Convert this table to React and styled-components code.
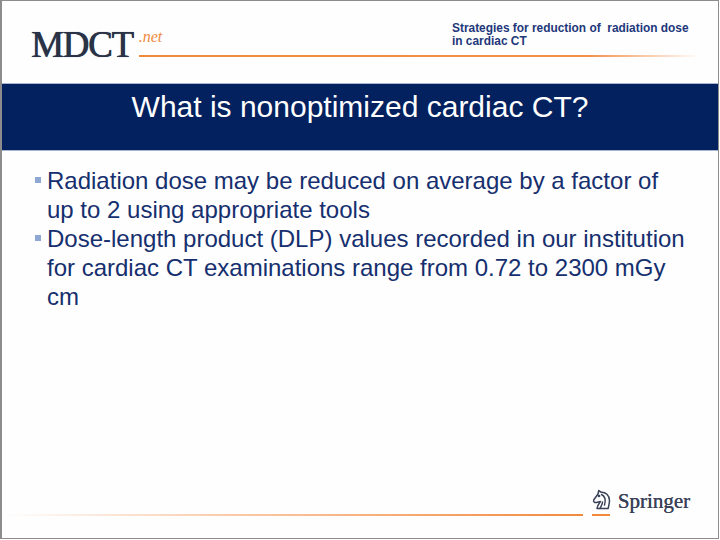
import React from "react";
import styled, { createGlobalStyle } from "styled-components";

const Global = createGlobalStyle`
  html, body { margin: 0; padding: 0; background: #ffffff; }
  * { box-sizing: border-box; }
`;

const Slide = styled.div`
  width: 719px;
  height: 539px;
  background: #fefefe;
  border: 1px solid #8c8c8c;
  border-left-width: 2px;
  display: flex;
  flex-direction: column;
  font-family: "Liberation Sans", Arial, sans-serif;
  overflow: hidden;
`;

const Header = styled.header`
  height: 82px;
  display: flex;
  align-items: flex-start;
  padding: 0 18px 0 29px;
`;

const Logo = styled.div`
  margin-top: 25px;
  font-family: "Liberation Serif", "Times New Roman", serif;
  font-size: 37px;
  line-height: 38px;
  letter-spacing: -1.3px;
  color: #2a3246;
  text-shadow: 0.4px 0 0 #2a3246, 0 0 1px rgba(42, 50, 70, 0.6);
`;

const HeaderRight = styled.div`
  flex: 1;
  margin-left: 6px;
  padding-top: 21px;
  display: flex;
  flex-direction: column;
`;

const TopRow = styled.div`
  display: flex;
  align-items: flex-end;
`;

const Net = styled.span`
  font-family: "Liberation Serif", "Times New Roman", serif;
  font-style: italic;
  font-size: 16px;
  line-height: 15px;
  color: #f08a3c;
  margin-bottom: 4px;
`;

const Subtitle = styled.div`
  margin-left: auto;
  width: 248px;
  font-size: 11.9px;
  line-height: 13px;
  font-weight: bold;
  color: #22377a;
  white-space: pre-line;
`;

const Rule = styled.div`
  height: 2px;
  background: ${(p) => p.$bg};
  margin-top: ${(p) => p.$mt || 0}px;
`;

const TitleBar = styled.div`
  height: 68px;
  background: #03215e;
  border-top: 1px solid #a7b4d2;
  border-bottom: 1px solid #a7b4d2;
  padding-top: 8px;
  text-align: center;
`;

const Title = styled.h1`
  margin: 0;
  font-weight: normal;
  font-size: 30px;
  line-height: 30px;
  color: #ffffff;
`;

const List = styled.ul`
  list-style: none;
  margin: 0;
  padding: 15px 0 0 33px;
  flex: 1;
`;

const Item = styled.li`
  display: flex;
  align-items: flex-start;
  font-size: 24px;
  line-height: 29px;
  color: #162f6e;
`;

const Bullet = styled.span`
  flex: none;
  width: 6px;
  height: 6px;
  margin-top: 11px;
  margin-right: 6px;
  background: #8ea7d3;
`;

const ItemText = styled.span`
  width: 643px;
`;

const Footer = styled.footer`
  display: flex;
  align-items: flex-end;
  padding: 0 28px 22px 3px;
`;

const FooterRule = styled.div`
  flex: 1;
  height: 2px;
  background: linear-gradient(to right, rgba(243, 137, 61, 0) 0%, rgba(243, 137, 61, 0.45) 40%, #f3893d 100%);
`;

const Mark = styled.div`
  display: flex;
  flex-direction: column;
  align-items: center;
  margin-left: 7px;
`;

const Underline = styled.div`
  width: 18px;
  height: 2px;
  margin-top: 4px;
  background: #f3893d;
`;

const Springer = styled.span`
  font-family: "Liberation Serif", "Times New Roman", serif;
  font-size: 21px;
  line-height: 21px;
  color: #3a4259;
  margin-left: 6px;
  margin-bottom: 4px;
  text-shadow: 0.3px 0 0 #3a4259;
`;

const Horse = () => (
  <svg width="22" height="22" viewBox="0 0 22 22" fill="none" stroke="#3a4259" strokeWidth="1.5" strokeLinejoin="round" strokeLinecap="round">
    <path d="M7 20.5 C7.5 17 9 15.5 10.5 13.5 L6.5 14.5 C4.5 15 3 13.5 3.8 11.8 L8 6 L8.8 2.5 L11 4.2 C15.5 3.8 19.5 7.5 19.5 12.5 C19.5 15.5 18.5 18 18.2 20.5 Z" />
    <path d="M11.5 6.5 C14.5 8 16 12 14.5 17" />
    <path d="M10 20.5 C11 18.5 12.5 16.5 12.5 14" />
    <circle cx="9" cy="8" r="0.6" fill="#3a4259" />
  </svg>
);

export default function App() {
  return (
    <>
      <Global />
      <Slide>
        <Header>
          <Logo>MDCT</Logo>
          <HeaderRight>
            <TopRow>
              <Net>.net</Net>
              <Subtitle>{"Strategies for reduction of\u00a0 radiation dose\nin cardiac CT"}</Subtitle>
            </TopRow>
            <Rule
              $mt={7}
              $bg="linear-gradient(to right, #f08a3c 0%, #f3914a 80%, rgba(243,145,74,0) 100%)"
            />
          </HeaderRight>
        </Header>
        <TitleBar>
          <Title>What is nonoptimized cardiac CT?</Title>
        </TitleBar>
        <List>
          <Item>
            <Bullet />
            <ItemText>Radiation dose may be reduced on average by a factor of up to 2 using appropriate tools</ItemText>
          </Item>
          <Item>
            <Bullet />
            <ItemText>Dose-length product (DLP) values recorded in our institution for cardiac CT examinations range from 0.72 to 2300 mGy cm</ItemText>
          </Item>
        </List>
        <Footer>
          <FooterRule />
          <Mark>
            <Horse />
            <Underline />
          </Mark>
          <Springer>Springer</Springer>
        </Footer>
      </Slide>
    </>
  );
}
